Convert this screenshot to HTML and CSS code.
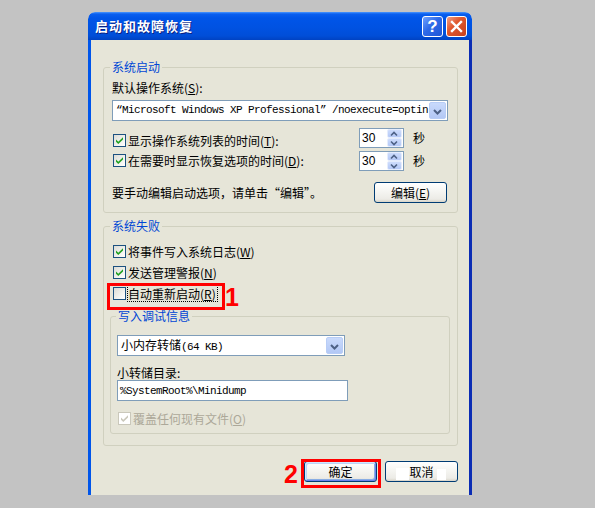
FILE: index.html
```html
<!DOCTYPE html>
<html lang="zh-CN">
<head>
<meta charset="utf-8">
<title>启动和故障恢复</title>
<link rel="stylesheet" href="styles.css">
</head>
<body>
<div class="dialog">
  <div class="titlebar">
    <span class="title">启动和故障恢复</span>
    <span class="tb help">?</span>
    <span class="tb close"><svg width="21" height="21" viewBox="0 0 21 21"><path d="M6 6 L15 15 M15 6 L6 15" stroke="#fff" stroke-width="2.4" stroke-linecap="square"/></svg></span>
  </div>
  <div class="client">
    <fieldset class="group g1">
      <legend>系统启动</legend>
      <div class="label">默认操作系统(<u>S</u>):</div>
      <div class="combo wide">
        <span class="ctext mono">“Microsoft Windows XP Professional” /noexecute=optin</span>
        <span class="dd"><svg width="15" height="17" viewBox="0 0 15 17"><path d="M4 7 L7.5 10.5 L11 7" fill="none" stroke="#4d6185" stroke-width="2"/></svg></span>
      </div>
      <div class="timers">
        <div class="checks">
          <div class="chk"><span class="box on"><svg width="11" height="11" viewBox="0 0 11 11"><path d="M2 4.5 L4.3 6.8 L9 2.2 L9 4.4 L4.3 9 L2 6.7 Z" fill="#21a121"/></svg></span><span class="lbl">显示操作系统列表的时间(<u>T</u>):</span></div>
          <div class="chk"><span class="box on"><svg width="11" height="11" viewBox="0 0 11 11"><path d="M2 4.5 L4.3 6.8 L9 2.2 L9 4.4 L4.3 9 L2 6.7 Z" fill="#21a121"/></svg></span><span class="lbl">在需要时显示恢复选项的时间(<u>D</u>):</span></div>
        </div>
        <div class="spins">
          <div class="spinrow">
            <div class="spin"><span class="num">30</span><span class="arrows"><span class="arr"><svg width="14" height="8" viewBox="0 0 14 8"><path d="M4 5.5 L7 2.5 L10 5.5" fill="none" stroke="#4d6185" stroke-width="1.6"/></svg></span><span class="arr"><svg width="14" height="8" viewBox="0 0 14 8"><path d="M4 2.5 L7 5.5 L10 2.5" fill="none" stroke="#4d6185" stroke-width="1.6"/></svg></span></span></div>
            <span class="unit">秒</span>
          </div>
          <div class="spinrow">
            <div class="spin"><span class="num">30</span><span class="arrows"><span class="arr"><svg width="14" height="8" viewBox="0 0 14 8"><path d="M4 5.5 L7 2.5 L10 5.5" fill="none" stroke="#4d6185" stroke-width="1.6"/></svg></span><span class="arr"><svg width="14" height="8" viewBox="0 0 14 8"><path d="M4 2.5 L7 5.5 L10 2.5" fill="none" stroke="#4d6185" stroke-width="1.6"/></svg></span></span></div>
            <span class="unit">秒</span>
          </div>
        </div>
      </div>
      <div class="editrow">
        <span>要手动编辑启动选项，请单击“编辑”。</span>
        <span class="btn edit">编辑(<u>E</u>)</span>
      </div>
    </fieldset>

    <fieldset class="group g2">
      <legend>系统失败</legend>
      <div class="rows">
        <div class="chk row"><span class="box on"><svg width="11" height="11" viewBox="0 0 11 11"><path d="M2 4.5 L4.3 6.8 L9 2.2 L9 4.4 L4.3 9 L2 6.7 Z" fill="#21a121"/></svg></span><span class="lbl">将事件写入系统日志(<u>W</u>)</span></div>
        <div class="chk row"><span class="box on"><svg width="11" height="11" viewBox="0 0 11 11"><path d="M2 4.5 L4.3 6.8 L9 2.2 L9 4.4 L4.3 9 L2 6.7 Z" fill="#21a121"/></svg></span><span class="lbl">发送管理警报(<u>N</u>)</span></div>
        <div class="chk row"><span class="box"></span><span class="lbl focus">自动重新启动(<u>R</u>)</span></div>
      </div>
      <fieldset class="group g3">
        <legend>写入调试信息</legend>
        <div class="combo small">
          <span class="ctext">小内存转储<span class="mono">(64 KB)</span></span>
          <span class="dd"><svg width="15" height="17" viewBox="0 0 15 17"><path d="M4 7 L7.5 10.5 L11 7" fill="none" stroke="#4d6185" stroke-width="2"/></svg></span>
        </div>
        <div class="label dirlabel">小转储目录:</div>
        <div class="textbox"><span class="mono">%SystemRoot%\Minidump</span></div>
        <div class="chk row disabled"><span class="box on dis"><svg width="11" height="11" viewBox="0 0 11 11"><path d="M2 4.5 L4.3 6.8 L9 2.2 L9 4.4 L4.3 9 L2 6.7 Z" fill="#cac8bb"/></svg></span><span class="lbl">覆盖任何现有文件(<u>O</u>)</span></div>
      </fieldset>
    </fieldset>

    <div class="buttons">
      <span class="btn default">确定</span>
      <span class="btn cancel">取消<span class="patch p1"></span><span class="patch p2"></span></span>
    </div>
  </div>

  <div class="mark box1"></div>
  <div class="num-mark n1">1</div>
  <div class="mark box2"></div>
  <div class="num-mark n2">2</div>
</div>
</body>
</html>
```

FILE: styles.css
```css
html, body {
  margin: 0;
  padding: 0;
}
body {
  background: #c3c3c3;
  font-family: "Noto Sans CJK SC", "Liberation Sans", sans-serif;
  font-size: 12px;
  line-height: 14px;
  color: #000;
}
u {
  text-decoration: underline;
  text-underline-offset: 1px;
}
.mono {
  font-family: "Liberation Mono", "Noto Sans CJK SC", monospace;
  font-size: 11px;
  letter-spacing: -0.6px;
}
.dialog {
  position: relative;
  margin: 12px 0 0 88px;
  width: 384px;
  height: 483px;
  display: flex;
  flex-direction: column;
  overflow: hidden;
  border-radius: 7px 7px 0 0;
}
.titlebar {
  flex: none;
  height: 28px;
  display: flex;
  align-items: center;
  gap: 3px;
  padding: 0 5px 0 7px;
  border-radius: 7px 7px 0 0;
  background: linear-gradient(to bottom, #4a97ff 0px, #0a5fef 2px, #0055e8 6px, #0052e2 55%, #004ed8 85%, #0042c2 100%);
}
.title {
  flex: 1;
  color: #fff;
  font-weight: bold;
  font-size: 13px;
  letter-spacing: 1px;
  text-shadow: 1px 1px 0 #0a2080;
  line-height: 16px;
}
.tb {
  width: 19px;
  height: 19px;
  border: 1px solid #fff;
  border-radius: 3px;
  display: flex;
  align-items: center;
  justify-content: center;
  color: #fff;
}
.tb svg {
  flex: none;
  margin: -1px;
}
.help {
  background: linear-gradient(135deg, #6fa2ff 0%, #2e6ae8 45%, #1f56d6 100%);
  font-family: "Liberation Sans", sans-serif;
  font-weight: bold;
  font-size: 17px;
  line-height: 19px;
}
.close {
  background: linear-gradient(135deg, #f0a088 0%, #e0582e 40%, #c8401c 100%);
}
.client {
  flex: 1;
  background: #e6e5d8;
  border-left: 3px solid #0055ea;
  border-right: 3px solid #0b2cb4;
  padding: 20px 11px 0 12px;
}
.group {
  min-width: 0;
  border: 1px solid #d0d0bf;
  border-radius: 3px;
}
.group > legend {
  color: #0046d5;
  padding: 0 2px;
  line-height: 14px;
  font-size: 12px;
}
.g1 {
  margin: 0;
  padding: 7px 9px 9px 8px;
}
.g1 > legend {
  margin-left: -2px;
}
.label {
  line-height: 14px;
}
.combo {
  height: 19px;
  border: 1px solid #7f9db9;
  background: #fff;
  display: flex;
  align-items: center;
  margin-top: 5px;
}
.combo .ctext {
  flex: 1;
  padding-left: 3px;
  white-space: nowrap;
  overflow: hidden;
  line-height: 17px;
}
.combo .dd {
  box-sizing: border-box;
  width: 17px;
  height: 17px;
  margin-right: 1px;
  border: 1px solid #b8cdf6;
  border-radius: 2px;
  background: linear-gradient(to bottom, #c9dafc, #b3c8f5);
  display: flex;
}
.timers {
  display: flex;
  margin-top: 7px;
}
.checks {
  flex: 1;
  padding-top: 2px;
  display: flex;
  flex-direction: column;
}
.chk {
  display: flex;
  align-items: center;
  height: 20px;
}
.box {
  flex: none;
  width: 11px;
  height: 11px;
  border: 1px solid #1c5180;
  background: linear-gradient(135deg, #dcdcd6 0%, #f2f2ee 60%, #ffffff 100%);
  display: flex;
  margin-left: 1px;
}
.box.dis {
  border-color: #cac8bb;
  background: #fff;
}
.lbl {
  margin-left: 1px;
  padding: 0 1px 0 0;
  border: 1px solid transparent;
  line-height: 15px;
}
.lbl.focus {
  border: 1px dotted #000;
}
.spins {
  display: flex;
  flex-direction: column;
  gap: 3px;
  margin-right: 23px;
}
.spinrow {
  display: flex;
  align-items: center;
  gap: 9px;
}
.spin {
  width: 43px;
  height: 18px;
  border: 1px solid #7f9db9;
  background: #fff;
  display: flex;
  align-items: center;
  justify-content: space-between;
}
.spin .num {
  font-family: "Liberation Sans", sans-serif;
  font-size: 12px;
  padding-left: 2px;
}
.arrows {
  width: 15px;
  height: 18px;
  display: flex;
  flex-direction: column;
  margin-right: 1px;
}
.arr {
  flex: 1;
  background: linear-gradient(to bottom, #cddcfc, #b4c8f6);
  border: 1px solid #e4ecfd;
  border-radius: 2px;
  display: flex;
  align-items: center;
  justify-content: center;
  overflow: hidden;
}
.arr svg {
  flex: none;
}
.unit {
  line-height: 14px;
}
.editrow {
  display: flex;
  align-items: center;
  justify-content: space-between;
  margin-top: 11px;
}
.btn {
  box-sizing: border-box;
  width: 73px;
  height: 21px;
  border: 1px solid #003c74;
  border-radius: 3px;
  background: linear-gradient(to bottom, #ffffff 0%, #f6f6f3 40%, #ecebe6 85%, #d8d4c8 100%);
  display: flex;
  align-items: center;
  justify-content: center;
  line-height: 14px;
}
.btn.edit {
  margin-right: 1px;
}
.btn.default {
  box-shadow: inset 1px 1px 0 #cee7ff, inset -1px -1px 0 #6982ee, inset 2px 2px 0 #bcd4f6, inset -2px -2px 0 #89ade4;
}
.g2 {
  margin: 6px 0 0 0;
  padding: 8px 7px 11px 6px;
}
.rows .row {
  height: 21px;
  padding-left: 2px;
}
.g3 {
  margin: 5px 0 0 0;
  padding: 12px 6px 4px 6px;
}
.g3 > legend {
  margin-left: -1px;
}
.combo.small {
  width: 226px;
  margin-top: 0;
}
.dirlabel {
  margin-top: 10px;
}
.textbox {
  box-sizing: content-box;
  width: 227px;
  height: 19px;
  border: 1px solid #7f9db9;
  background: #fff;
  display: flex;
  align-items: center;
  padding-left: 2px;
}
.chk.disabled {
  margin-top: 7px;
  height: 21px;
  color: #aca899;
}
.buttons {
  display: flex;
  justify-content: flex-end;
  gap: 8px;
  margin-top: 15px;
}
.btn.cancel {
  position: relative;
}
.patch {
  position: absolute;
  background: #fff;
}
.p1 {
  left: 10px;
  top: 6px;
  width: 13px;
  height: 12px;
}
.p2 {
  left: 51px;
  top: 7px;
  width: 9px;
  height: 11px;
}
.mark {
  position: absolute;
  border: 3px solid #ff0000;
  box-sizing: border-box;
}
.box1 {
  left: 19px;
  top: 271px;
  width: 118px;
  height: 27px;
}
.box2 {
  left: 213px;
  top: 447px;
  width: 80px;
  height: 29px;
}
.num-mark {
  position: absolute;
  color: #ff0000;
  font-family: "Liberation Sans", sans-serif;
  font-weight: bold;
  font-size: 25px;
  line-height: 25px;
}
.n1 {
  left: 137px;
  top: 273px;
}
.n2 {
  left: 196px;
  top: 450px;
}
```
